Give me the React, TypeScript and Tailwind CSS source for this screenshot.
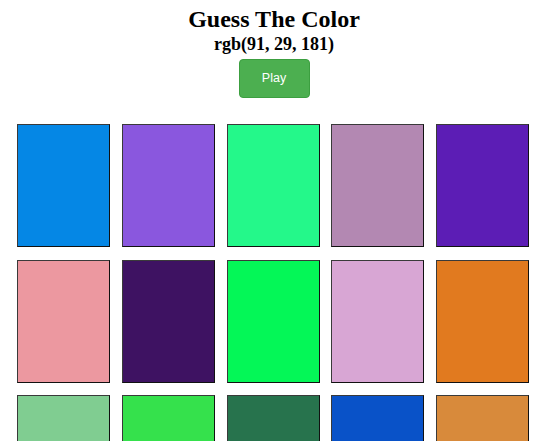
import React from "react";

const colors = [
  "#0587e5", "#8a57de", "#24f88a", "#b388b2", "#5c1db5",
  "#ec98a0", "#3e1262", "#04f757", "#d8a6d4", "#e17a1f",
  "#80cd91", "#35e14c", "#27734d", "#0952c8", "#d88a3b",
];

export default function App() {
  return (
    <div className="w-[548px] h-[441px] overflow-hidden bg-white">
      <div className="flex flex-col items-center pt-[5px] font-['Liberation_Serif',serif] text-black font-bold">
        <h1 className="text-[24px] leading-[28px]">Guess The Color</h1>
        <h2 className="text-[18px] leading-[21px] mt-[1px]">rgb(91, 29, 181)</h2>
        <button className="mt-[4px] w-[71px] h-[39px] rounded-[4px] bg-[#4caf50] border border-[#3c9f40] text-white text-[12.5px] font-normal font-['Liberation_Sans',Arial,sans-serif]">
          Play
        </button>
      </div>
      <div className="grid grid-cols-[repeat(5,93px)] gap-x-[11.75px] gap-y-[12.5px] pl-[17px] mt-[26px]">
        {colors.map((c, i) => (
          <div
            key={i}
            className="h-[123px] border border-t-[#3a3a3a] border-l-[#3a3a3a] border-r-[#111] border-b-[#111]"
            style={{ backgroundColor: c }}
          />
        ))}
      </div>
    </div>
  );
}
